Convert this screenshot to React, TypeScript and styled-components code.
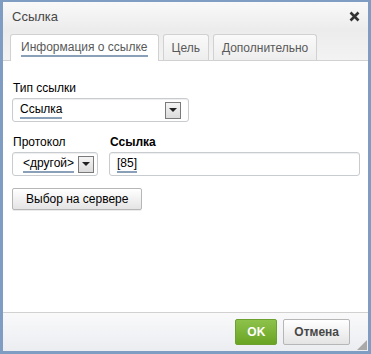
import * as React from 'react'
import styled, { createGlobalStyle } from 'styled-components'

const GlobalStyle = createGlobalStyle`
  html, body {
    margin: 0;
    padding: 0;
    background: #ffffff;
  }
  body {
    font-family: "Liberation Sans", Arial, sans-serif;
    font-size: 12px;
    color: #333;
  }
`;

const Dialog = styled.div`
  width: 371px;
  height: 354px;
  box-sizing: border-box;
  border: 3px solid #7f9cc2;
  border-top-width: 2px;
  display: flex;
  flex-direction: column;
  background: #fff;
  position: relative;
`;

const TitleBar = styled.div`
  height: 28px;
  flex: none;
  display: flex;
  align-items: center;
  justify-content: space-between;
  padding: 0 8px 0 9px;
  background: linear-gradient(to bottom, #f9f9f9, #ececec);
  font-size: 13px;
  color: #474747;
`;

const CloseIcon = styled.svg`
  width: 11px;
  height: 11px;
  display: block;
`;

const TabStrip = styled.div`
  flex: none;
  display: flex;
  align-items: flex-end;
  gap: 4px;
  padding: 4px 0 0 7px;
  background: linear-gradient(to bottom, #ececec, #f3f3f3);
  border-bottom: 1px solid #d1d1d1;
  height: 26px;
`;

const Tab = styled.div<{ $active?: boolean }>`
  box-sizing: border-box;
  display: flex;
  align-items: center;
  padding: 0 ${(p) => (p.$active ? 10 : 8)}px;
  border: 1px solid #d1d1d1;
  border-bottom: none;
  border-radius: 3px 3px 0 0;
  background: ${(p) => (p.$active ? '#fff' : 'linear-gradient(to bottom, #fafafa, #ededed)')};
  color: #595959;
  font-size: 12px;
  margin-bottom: ${(p) => (p.$active ? '-1px' : '0')};
  height: ${(p) => (p.$active ? 27 : 26)}px;
`;

const Focused = styled.span`
  border-bottom: 2px solid #8aa0b8;
  line-height: 15px;
`;

const Body = styled.div`
  flex: 1;
  padding: 20px 8px 0 9px;
  background: #fff;
`;

const Label = styled.div<{ $bold?: boolean }>`
  font-size: 12px;
  font-weight: ${(p) => (p.$bold ? 'bold' : 'normal')};
  color: #000;
  margin-bottom: 3px;
  padding-left: 1px;
`;

const Field = styled.div`
  margin-bottom: 13px;
`;

const Row = styled.div`
  display: flex;
  gap: 11px;
  margin-bottom: 12px;
`;

const Column = styled.div`
  flex: 1;
  display: flex;
  flex-direction: column;
`;

const SelectBox = styled.div<{ $w: number; $pl: number; $pr: number }>`
  width: ${(p) => p.$w}px;
  height: 24px;
  box-sizing: border-box;
  border: 1px solid #c9cccf;
  border-radius: 3px;
  display: flex;
  align-items: center;
  justify-content: space-between;
  padding: 0 ${(p) => p.$pr}px 0 ${(p) => p.$pl}px;
  background: #fff;
  box-shadow: inset 0 1px 1px #eee;
  font-size: 12px;
  color: #000;
`;

const Arrow = styled.div`
  width: 16px;
  height: 17px;
  box-sizing: border-box;
  border: 1px solid #7a7a7a;
  background: linear-gradient(to bottom, #f4f4f4, #dcdcdc);
  display: flex;
  align-items: center;
  justify-content: center;
  &::after {
    content: '';
    border-left: 4px solid transparent;
    border-right: 4px solid transparent;
    border-top: 4px solid #222;
  }
`;

const TextInput = styled.div`
  height: 24px;
  box-sizing: border-box;
  border: 1px solid #c9cccf;
  border-radius: 3px;
  display: flex;
  align-items: center;
  padding: 0 7px;
  box-shadow: inset 0 1px 1px #eee;
  font-size: 12px;
  color: #000;
`;

const Button = styled.div`
  display: inline-flex;
  align-items: center;
  height: 22px;
  box-sizing: border-box;
  padding: 0 13px;
  border: 1px solid #b6b6b6;
  border-radius: 2px;
  background: linear-gradient(to bottom, #fff, #e4e4e4);
  box-shadow: 0 1px 0 rgba(0,0,0,0.08);
  font-size: 12px;
  color: #000;
`;

const Footer = styled.div`
  flex: none;
  height: 38px;
  border-top: 1px solid #d1d1d1;
  background: linear-gradient(to bottom, #f9f9fa, #ebedf1);
  display: flex;
  align-items: center;
  justify-content: flex-end;
  gap: 6px;
  padding: 0 18px 0 0;
  position: relative;
`;

const FooterButton = styled.div<{ $primary?: boolean }>`
  height: 26px;
  box-sizing: border-box;
  display: flex;
  align-items: center;
  padding: 0 ${(p) => (p.$primary ? 11 : 10)}px;
  border-radius: 2px;
  font-size: 12px;
  font-weight: bold;
  border: 1px solid ${(p) => (p.$primary ? '#6ea030' : '#b6b6b6')};
  background: ${(p) =>
    p.$primary ? 'linear-gradient(to bottom, #8dc24b, #6aa423)' : 'linear-gradient(to bottom, #fff, #e4e4e4)'};
  color: ${(p) => (p.$primary ? '#fff' : '#474747')};
`;

const Grip = styled.svg`
  position: absolute;
  right: 1px;
  bottom: 1px;
  width: 10px;
  height: 10px;
`;

export default function App() {
  return (
    <>
      <GlobalStyle />
      <Dialog>
        <TitleBar>
          <span>Ссылка</span>
          <CloseIcon viewBox="0 0 11 11">
            <path d="M1.5 1.5 L9.5 9.5 M9.5 1.5 L1.5 9.5" stroke="#333" strokeWidth="2.6" />
          </CloseIcon>
        </TitleBar>
        <TabStrip>
          <Tab $active>
            <Focused>Информация о ссылке</Focused>
          </Tab>
          <Tab>Цель</Tab>
          <Tab>Дополнительно</Tab>
        </TabStrip>
        <Body>
          <Field>
            <Label>Тип ссылки</Label>
            <SelectBox $w={177} $pl={7} $pr={7}>
              <Focused>Ссылка</Focused>
              <Arrow />
            </SelectBox>
          </Field>
          <Row>
            <div>
              <Label>Протокол</Label>
              <SelectBox $w={86} $pl={10} $pr={3}>
                <Focused>&lt;другой&gt;</Focused>
                <Arrow />
              </SelectBox>
            </div>
            <Column>
              <Label $bold>Ссылка</Label>
              <TextInput>
                <Focused>[85]</Focused>
              </TextInput>
            </Column>
          </Row>
          <Button>Выбор на сервере</Button>
        </Body>
        <Footer>
          <FooterButton $primary>OK</FooterButton>
          <FooterButton>Отмена</FooterButton>
          <Grip viewBox="0 0 10 10">
            <path d="M10 0 L10 10 L0 10 Z" fill="#a9a9a9" />
          </Grip>
        </Footer>
      </Dialog>
    </>
  )
}
